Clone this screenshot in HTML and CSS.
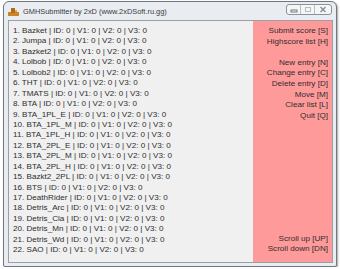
FILE: index.html
```html
<!doctype html>
<html lang="en">
<head>
    <meta charset="UTF-8">
    <title>GMHSubmitter by 2xD (www.2xDSoft.ru.gg)</title>
    <link rel="stylesheet" href="styles.css">
</head>
<body>
<div class="window">
    <div class="titlebar">
        <svg class="app-icon" width="11" height="9" viewBox="0 0 11 9">
            <rect x="0" y="5" width="11" height="4" fill="#c8862a"/>
            <rect x="3" y="1" width="4" height="5" fill="#b86a1c"/>
            <rect x="7" y="3" width="2" height="2" fill="#e0a848"/>
        </svg>
        <span class="title">GMHSubmitter by 2xD (www.2xDSoft.ru.gg)</span>
        <div class="caption-buttons">
            <span class="cbtn"><svg width="8" height="6" viewBox="0 0 8 6"><rect x="1" y="3" width="6" height="2" fill="none" stroke="#777" stroke-width="1"/></svg></span>
            <span class="cbtn"><svg width="8" height="7" viewBox="0 0 8 7"><rect x="1.5" y="1.5" width="5" height="4" fill="none" stroke="#bbb" stroke-width="1"/></svg></span>
            <span class="cbtn close"><svg width="8" height="7" viewBox="0 0 8 7"><path d="M1.5 1 L6.5 6 M6.5 1 L1.5 6" stroke="#888" stroke-width="1.2"/></svg></span>
        </div>
    </div>
    <div class="client">
        <ul class="list">
            <li>1. Bazket | ID: 0 | V1: 0 | V2: 0 | V3: 0</li>
            <li>2. Jumpa | ID: 0 | V1: 0 | V2: 0 | V3: 0</li>
            <li>3. Bazket2 | ID: 0 | V1: 0 | V2: 0 | V3: 0</li>
            <li>4. Lolbob | ID: 0 | V1: 0 | V2: 0 | V3: 0</li>
            <li>5. Lolbob2 | ID: 0 | V1: 0 | V2: 0 | V3: 0</li>
            <li>6. THT | ID: 0 | V1: 0 | V2: 0 | V3: 0</li>
            <li>7. TMATS | ID: 0 | V1: 0 | V2: 0 | V3: 0</li>
            <li>8. BTA | ID: 0 | V1: 0 | V2: 0 | V3: 0</li>
            <li>9. BTA_1PL_E | ID: 0 | V1: 0 | V2: 0 | V3: 0</li>
            <li>10. BTA_1PL_M | ID: 0 | V1: 0 | V2: 0 | V3: 0</li>
            <li>11. BTA_1PL_H | ID: 0 | V1: 0 | V2: 0 | V3: 0</li>
            <li>12. BTA_2PL_E | ID: 0 | V1: 0 | V2: 0 | V3: 0</li>
            <li>13. BTA_2PL_M | ID: 0 | V1: 0 | V2: 0 | V3: 0</li>
            <li>14. BTA_2PL_H | ID: 0 | V1: 0 | V2: 0 | V3: 0</li>
            <li>15. Bazkt2_2PL | ID: 0 | V1: 0 | V2: 0 | V3: 0</li>
            <li>16. BTS | ID: 0 | V1: 0 | V2: 0 | V3: 0</li>
            <li>17. DeathRider | ID: 0 | V1: 0 | V2: 0 | V3: 0</li>
            <li>18. Detris_Arc | ID: 0 | V1: 0 | V2: 0 | V3: 0</li>
            <li>19. Detris_Cla | ID: 0 | V1: 0 | V2: 0 | V3: 0</li>
            <li>20. Detris_Mn | ID: 0 | V1: 0 | V2: 0 | V3: 0</li>
            <li>21. Detris_Wd | ID: 0 | V1: 0 | V2: 0 | V3: 0</li>
            <li>22. SAO | ID: 0 | V1: 0 | V2: 0 | V3: 0</li>
        </ul>
        <div class="menu">
            <div class="menu-top">
                <p>Submit score [S]</p>
                <p>Highscore list [H]</p>
                <p>&nbsp;</p>
                <p>New entry [N]</p>
                <p>Change entry [C]</p>
                <p>Delete entry [D]</p>
                <p>Move [M]</p>
                <p>Clear list [L]</p>
                <p>Quit [Q]</p>
            </div>
            <div class="menu-bottom">
                <p>Scroll up [UP]</p>
                <p>Scroll down [DN]</p>
            </div>
        </div>
    </div>
</div>
</body>
</html>
```

FILE: styles.css
```css
html * {
    margin: 0;
    padding: 0;
    box-sizing: border-box;
}

body {
    background-color: #fff;
    font-family: "Liberation Sans", Arial, sans-serif;
}

ul, li {
    list-style: none;
}

.window {
    width: 334px;
    height: 266px;
    margin: 1px 0 0 3px;
    border: 1px solid #6f7780;
    border-radius: 6px 6px 2px 2px;
    background-color: #e9edf2;
    box-shadow: 1px 1px 2px rgba(0, 0, 0, 0.35);
    display: flex;
    flex-direction: column;
}

.titlebar {
    height: 18px;
    display: flex;
    align-items: center;
    padding: 0 4px 0 4px;
}

.app-icon {
    margin-right: 4px;
}

.title {
    flex: 1;
    font-size: 7.4px;
    color: #3a3a3a;
}

.caption-buttons {
    display: flex;
    border: 1px solid #8a929c;
    border-radius: 3px;
    height: 11px;
    background-color: #f4f6f8;
    margin-top: -3px;
}

.cbtn {
    display: flex;
    align-items: center;
    justify-content: center;
    width: 14px;
    border-right: 1px solid #b8bec6;
}

.cbtn.close {
    width: 16px;
    border-right: none;
}

.client {
    flex: 1;
    margin: 0 3px 3px 4px;
    border: 1px solid #9aa0a8;
    background-color: #f0f0f0;
    display: flex;
    font-size: 8.1px;
    color: #2e2e2e;
}

.list {
    flex: 1;
    padding: 5px 0 0 4px;
    line-height: 10.43px;
}

.menu {
    width: 79px;
    background-color: #ff9a9a;
    display: flex;
    flex-direction: column;
    justify-content: space-between;
    text-align: right;
    padding: 5px 4px 7px 0;
    line-height: 10.6px;
}
```
